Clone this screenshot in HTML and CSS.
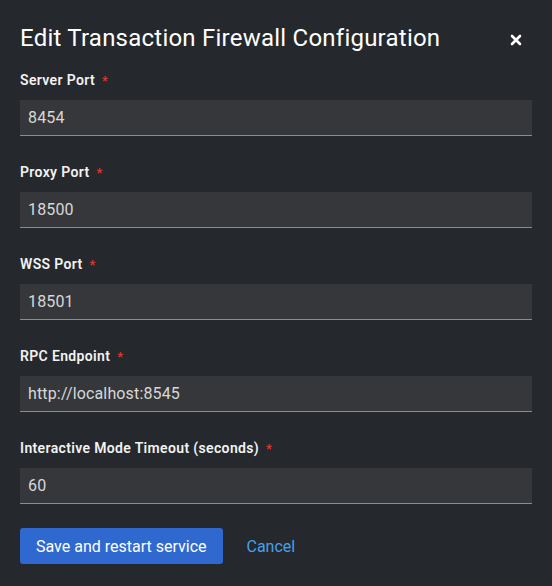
FILE: index.html
```html
<!DOCTYPE html>
<html lang="en">
<head>
<meta charset="utf-8">
<title>Edit Transaction Firewall Configuration</title>
<link rel="stylesheet" href="styles.css">
</head>
<body>
<div class="modal">
  <header class="modal-header">
    <h1 class="modal-title">Edit Transaction Firewall Configuration</h1>
    <button class="close" aria-label="Close">
      <svg viewBox="0 0 12 12" width="12" height="12"><path d="M2 2 L10 10 M10 2 L2 10" stroke="#fff" stroke-width="2.6" stroke-linecap="round"/></svg>
    </button>
  </header>
  <form class="form">
    <div class="field">
      <label class="label">Server Port<span class="req">*</span></label>
      <input class="input" type="text" value="8454">
    </div>
    <div class="field">
      <label class="label">Proxy Port<span class="req">*</span></label>
      <input class="input" type="text" value="18500">
    </div>
    <div class="field">
      <label class="label">WSS Port<span class="req">*</span></label>
      <input class="input" type="text" value="18501">
    </div>
    <div class="field">
      <label class="label">RPC Endpoint<span class="req">*</span></label>
      <input class="input" type="text" value="http://localhost:8545">
    </div>
    <div class="field">
      <label class="label">Interactive Mode Timeout (seconds)<span class="req">*</span></label>
      <input class="input" type="text" value="60">
    </div>
    <div class="actions">
      <button type="button" class="btn-primary">Save and restart service</button>
      <button type="button" class="btn-link">Cancel</button>
    </div>
  </form>
</div>
</body>
</html>
```
FILE: styles.css
```css
* { box-sizing: border-box; }
html, body {
  margin: 0;
  padding: 0;
  background: #25282c;
  font-family: Roboto, "Noto Sans", sans-serif;
  color: #e0e0e0;
}
.modal {
  width: 552px;
  height: 586px;
  padding: 20px 20px 0 20px;
}
.modal-header {
  display: flex;
  align-items: center;
  justify-content: space-between;
  height: 36px;
}
.modal-title {
  margin: 0;
  font-size: 24px;
  font-weight: 400;
  letter-spacing: 0.23px;
  color: #ffffff;
  line-height: 36px;
}
.close {
  background: none;
  border: 0;
  padding: 0;
  width: 12px;
  height: 12px;
  margin-right: 10px;
  margin-top: 4px;
  display: flex;
}
.form {
  display: flex;
  flex-direction: column;
  gap: 26px;
  margin-top: 14px;
}
.field {
  display: flex;
  flex-direction: column;
  gap: 10px;
}
.label {
  display: block;
  height: 20px;
  font-size: 14px;
  font-weight: 600;
  letter-spacing: 0.35px;
  color: #f2f2f2;
  line-height: 20px;
}
.req {
  color: #e0392e;
  margin-left: 7px;
  font-size: 13px;
  line-height: 1;
}
.input {
  height: 36px;
  width: 100%;
  background: #36373a;
  border: 0;
  border-bottom: 1px solid #8a8d90;
  color: #d8d8d8;
  font-family: inherit;
  font-size: 16px;
  letter-spacing: 0.15px;
  padding: 0 8px;
  outline: none;
}
.actions {
  display: flex;
  align-items: center;
  gap: 24px;
  margin-top: -2px;
}
.btn-primary {
  height: 36px;
  padding: 0 16px;
  background: #2f69cf;
  color: #fff;
  border: 0;
  border-radius: 3px;
  font-family: inherit;
  font-size: 16px;
}
.btn-link {
  background: none;
  border: 0;
  padding: 0;
  color: #45a1ec;
  font-family: inherit;
  font-size: 16px;
}
```
